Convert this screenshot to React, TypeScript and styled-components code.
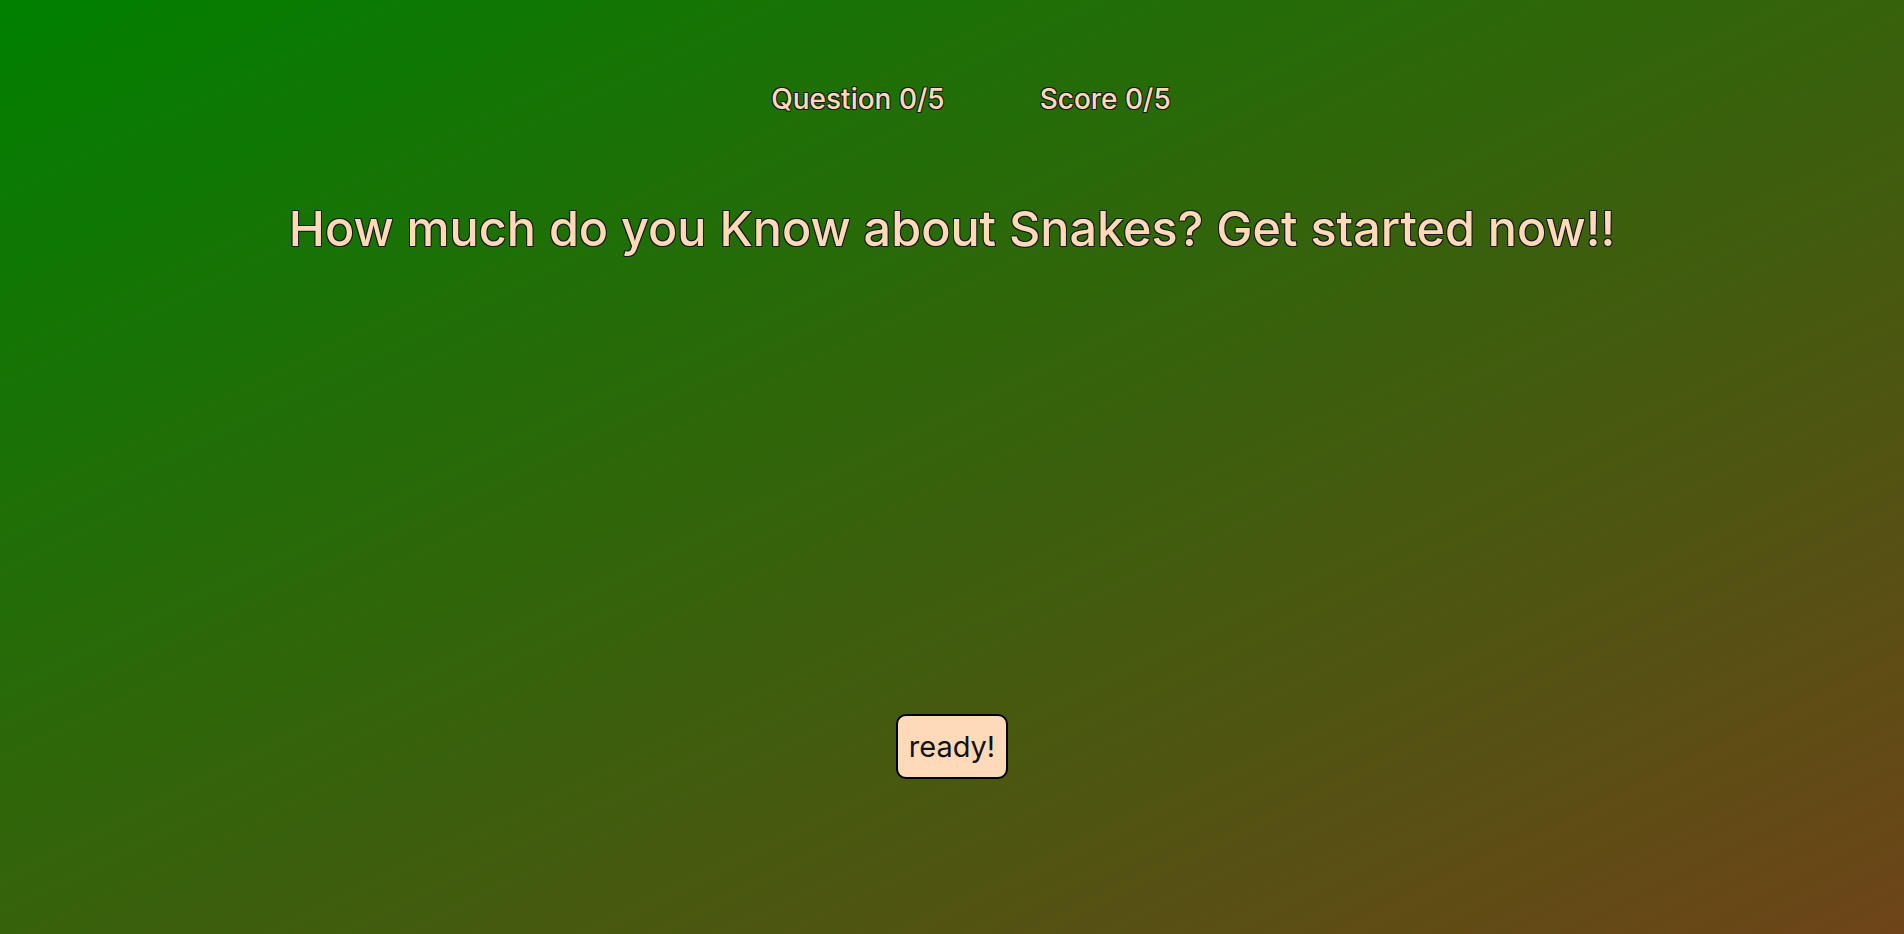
import styled, { createGlobalStyle } from 'styled-components';

const GlobalStyle = createGlobalStyle`
  html, body {
    margin: 0;
    padding: 0;
  }
  body {
    min-height: 100vh;
    background: linear-gradient(to bottom right, #008000, #6e4418);
    font-family: Inter, "Open Sans", sans-serif;
  }
`;

const peach = '#ffdab9';
const outline = `-1px -1px 0 #1a1a1a, 1px -1px 0 #1a1a1a, -1px 1px 0 #1a1a1a, 1px 1px 0 #1a1a1a`;

const Page = styled.div`
  min-height: 100vh;
  display: flex;
  flex-direction: column;
  align-items: center;
  box-sizing: border-box;
  padding-top: 82px;
`;

const Stats = styled.div`
  display: flex;
  gap: 95px;
  padding-left: 38px;
`;

const Stat = styled.span`
  color: ${peach};
  font-size: 28px;
  font-weight: 500;
  text-shadow: ${outline};
`;

const Question = styled.h1`
  margin: 83px 0 0;
  color: ${peach};
  font-size: 48.5px;
  font-weight: 500;
  text-shadow: ${outline};
  text-align: center;
`;

const Answers = styled.div`
  height: 456px;
`;

const ReadyButton = styled.button`
  background: ${peach};
  border: 2px solid #000;
  border-radius: 10px;
  padding: 13px 11px;
  font-family: inherit;
  font-size: 29px;
  color: #111;
  cursor: pointer;
`;

export default function App() {
  return (
    <>
      <GlobalStyle />
      <Page>
        <Stats>
          <Stat>Question 0/5</Stat>
          <Stat>Score 0/5</Stat>
        </Stats>
        <Question>How much do you Know about Snakes? Get started now!!</Question>
        <Answers />
        <ReadyButton>ready!</ReadyButton>
      </Page>
    </>
  );
}
